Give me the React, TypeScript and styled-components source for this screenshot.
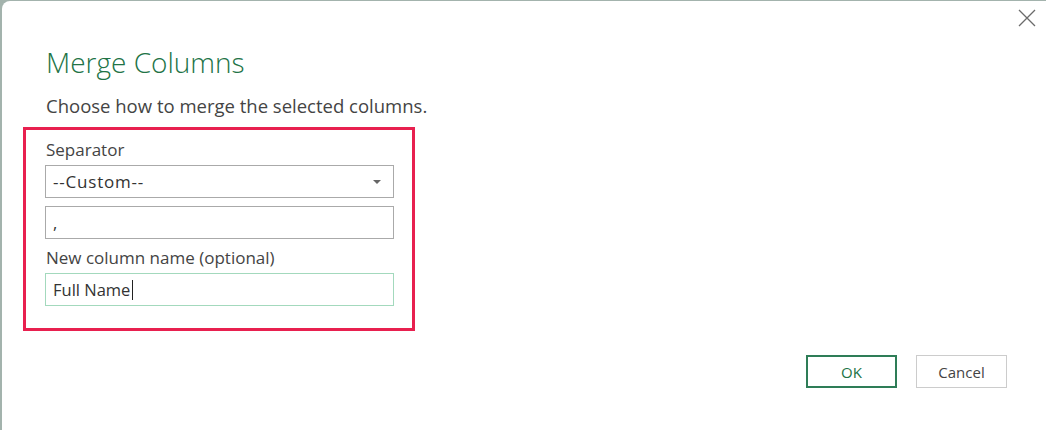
import React from 'react';
import styled, { createGlobalStyle } from 'styled-components';

const GlobalStyle = createGlobalStyle`
  html, body {
    margin: 0;
    padding: 0;
    background: #a3b3ad;
    overflow: hidden;
  }
  * {
    box-sizing: border-box;
  }
`;

const Dialog = styled.div`
  position: relative;
  margin: 1px 0 0 2px;
  width: 1044px;
  height: 429px;
  background: #ffffff;
  border-top-left-radius: 8px;
  display: flex;
  flex-direction: column;
  font-family: "Open Sans", "Noto Sans", sans-serif;
  color: #444444;
`;

const CloseButton = styled.button`
  position: absolute;
  top: 5px;
  right: 7px;
  width: 24px;
  height: 24px;
  padding: 0;
  border: none;
  background: transparent;
  display: flex;
  align-items: center;
  justify-content: center;
`;

const Title = styled.h1`
  margin: 43px 0 0 44px;
  font-size: 28px;
  font-weight: 300;
  line-height: 36px;
  color: #217346;
`;

const Description = styled.p`
  margin: 14px 0 0 44px;
  font-size: 18.5px;
  line-height: 24px;
`;

const Highlight = styled.div`
  margin: 9px 0 0 21px;
  width: 392px;
  border: 3px solid #e8204f;
  padding: 9px 18px 14px 19px;
  display: flex;
  flex-direction: column;
`;

const Label = styled.label`
  font-size: 17px;
  line-height: 22px;
  padding-left: 1px;
  margin-bottom: 4px;
`;

const Field = styled.div<{ $focused?: boolean }>`
  height: 33px;
  border: 1px solid ${(p) => (p.$focused ? '#a3d9bd' : '#aaaaaa')};
  display: flex;
  align-items: center;
  padding: 0 7px;
  font-size: 16.5px;
  color: #333333;
  margin-bottom: 8px;
`;

const SelectText = styled.span`
  font-size: 17px;
  letter-spacing: 0.8px;
`;

const Caret = styled.span`
  display: inline-block;
  width: 1px;
  height: 20px;
  background: #222222;
  margin-left: 2px;
`;

const Arrow = styled.span`
  margin-left: auto;
  margin-right: 5px;
  width: 0;
  height: 0;
  border-left: 4px solid transparent;
  border-right: 4px solid transparent;
  border-top: 4px solid #666666;
`;

const Footer = styled.div`
  margin-top: auto;
  margin-bottom: 42px;
  padding-right: 39px;
  display: flex;
  justify-content: flex-end;
  gap: 19px;
`;

const Button = styled.button<{ $primary?: boolean }>`
  width: 91px;
  height: 33px;
  background: #ffffff;
  border: ${(p) => (p.$primary ? '2px solid #2e7d57' : '1px solid #cccccc')};
  font-family: "Open Sans", "Noto Sans", sans-serif;
  font-size: 15px;
  color: ${(p) => (p.$primary ? '#217346' : '#444444')};
`;

export default function App() {
  return (
    <>
      <GlobalStyle />
      <Dialog>
        <CloseButton aria-label="Close">
          <svg width="18" height="18" viewBox="0 0 18 18">
            <path d="M1 1 L17 17 M17 1 L1 17" stroke="#6b6b6b" strokeWidth="1.3" fill="none" />
          </svg>
        </CloseButton>
        <Title>Merge Columns</Title>
        <Description>Choose how to merge the selected columns.</Description>
        <Highlight>
          <Label>Separator</Label>
          <Field>
            <SelectText>--Custom--</SelectText>
            <Arrow />
          </Field>
          <Field>,</Field>
          <Label>New column name (optional)</Label>
          <Field $focused>
            Full Name
            <Caret />
          </Field>
        </Highlight>
        <Footer>
          <Button $primary>OK</Button>
          <Button>Cancel</Button>
        </Footer>
      </Dialog>
    </>
  );
}
